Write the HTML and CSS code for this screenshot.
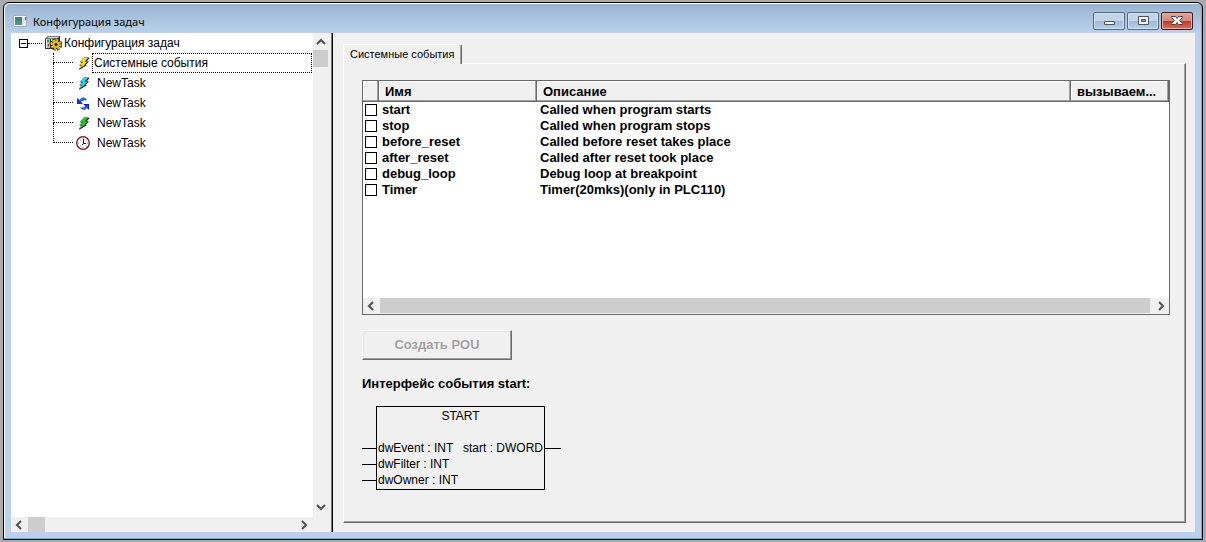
FILE: index.html
```html
<!DOCTYPE html>
<html lang="ru">
<head>
<meta charset="utf-8">
<title>Конфигурация задач</title>
<link rel="stylesheet" href="styles.css">
</head>
<body>
<svg class="defs" width="0" height="0" aria-hidden="true">
  <symbol id="bolt" viewBox="0 0 16 16">
    <path d="M9 3h4.500l-3 3.500h2.500l-3.500 3.500h1.500l-8 5 3-4.500H4l3.500-3H4.500z" fill="#000"/>
    <path d="M8 2.500h4.500L9 6.500h3L8.500 9.500H10L3 14l3-4H3.500L7 7H4z" fill="currentColor" stroke="#555" stroke-width=".5"/>
  </symbol>
  <symbol id="chev-left" viewBox="0 0 16 16"><path d="M10 4L6 8l4 4" fill="none" stroke="#505050" stroke-width="2"/></symbol>
  <symbol id="chev-right" viewBox="0 0 16 16"><path d="M6 4l4 4-4 4" fill="none" stroke="#505050" stroke-width="2"/></symbol>
  <symbol id="chev-up" viewBox="0 0 16 16"><path d="M4 11l4-4 4 4" fill="none" stroke="#505050" stroke-width="2"/></symbol>
  <symbol id="chev-down" viewBox="0 0 16 16"><path d="M4 5l4 4 4-4" fill="none" stroke="#505050" stroke-width="2"/></symbol>
</svg>

<div class="window">
  <header class="titlebar">
    <svg class="app-icon" viewBox="0 0 16 16" aria-hidden="true">
      <defs><linearGradient id="app" x1="0" y1="0" x2="0" y2="1"><stop offset="0" stop-color="#3c74a0"/><stop offset="1" stop-color="#4fa06c"/></linearGradient></defs>
      <path d="M1.500 2.500h13v11h-13z" fill="#fff" stroke="#a3adb7"/>
      <path d="M3 4h7v8H3z" fill="url(#app)"/>
      <path d="M10 4h3v8h-3z" fill="#e2e2e2"/>
      <path d="M13 4h1v3h-1z" fill="#4a6078"/>
    </svg>
    <h1 class="title">Конфигурация задач</h1>
    <div class="controls">
      <button class="control" type="button" aria-label="Свернуть"><svg viewBox="0 0 30 16"><path d="M10.500 8.500h10v3h-10z" fill="#f8f8f8" stroke="#4c5561"/></svg></button>
      <button class="control" type="button" aria-label="Развернуть"><svg viewBox="0 0 30 16"><path d="M10.500 3.500h10v8h-10z" fill="#f8f8f8" stroke="#4c5561"/><path d="M13.500 6.500h4v2h-4z" fill="#8aa9ca" stroke="#4c5561"/></svg></button>
      <button class="control control-close" type="button" aria-label="Закрыть"><svg viewBox="0 0 30 16"><path d="M9.500 3.500h4l1.500 2 1.500-2h4v1L17.500 7.500l3 3v1h-4L15 9.500l-1.500 2h-4v-1l3-3-3-3z" fill="#f8f8f8" stroke="#593b42"/></svg></button>
    </div>
  </header>

  <main class="content">
    <aside class="sidebar">
      <nav class="tree">
        <div class="node">
          <button class="expander" type="button" aria-label="Свернуть узел"></button>
          <span class="dash"></span>
          <svg class="root-icon" viewBox="0 0 17 16" aria-hidden="true">
            <path d="M0 4l3-3h12v10l-2 3H0z" fill="#333"/>
            <path d="M3.500 1.500h11l-2 2h-11z" fill="#d4d4d4"/>
            <path d="M1 4h4v9H1zM6 4h3v9H6zM10 4h3v9h-3z" fill="#b4b4b4"/>
            <path d="M1 4h1v9H1zM6 4h1v9H6zM10 4h1v9h-1z" fill="#eee"/>
            <path d="M2 5h2v2H2z" fill="#0b0"/><path d="M3 9h1v2H3z" fill="#d22"/>
            <circle cx="11" cy="9.500" r="4.500" fill="none" stroke="#222" stroke-width="3.500" stroke-dasharray="2.600 .93"/>
            <circle cx="11" cy="9.500" r="4.300" fill="none" stroke="#f0cc28" stroke-width="2.400" stroke-dasharray="1.680 1.690"/>
            <circle cx="11" cy="9.500" r="2.600" fill="#8a7a40" stroke="#e8c020" stroke-width="1.600"/>
            <circle cx="11" cy="9.500" r="1.200" fill="#222"/>
          </svg>
          <a class="node-label" href="#root">Конфигурация задач</a>
        </div>
        <ul class="children">
          <li class="leaf"><span class="branch"></span><svg class="icon yellow"><use href="#bolt"/></svg><a class="leaf-label selected" href="#events">Системные события</a></li>
          <li class="leaf"><span class="branch"></span><svg class="icon cyan"><use href="#bolt"/></svg><a class="leaf-label" href="#task1">NewTask</a></li>
          <li class="leaf"><span class="branch"></span><svg class="icon" viewBox="0 0 16 16">
            <path d="M1 3v6h6L5 7c0-1 2-2 6-2L9 3C7 2 5 3 3.500 5z" fill="#1030e8"/>
            <path d="M3.500 6C5 4 7 3.500 9 4" fill="none" stroke="#30b0f4"/>
            <path d="M13 15V9H7l2.500 2c0 1-2 2-5.500 1.500L6 14c2 1 3.500 1 5-1z" fill="#0a18d0"/>
            <path d="M11.500 10.500c0 2-2 3-4.500 3" fill="none" stroke="#30b0f4"/>
          </svg><a class="leaf-label" href="#task2">NewTask</a></li>
          <li class="leaf"><span class="branch"></span><svg class="icon green"><use href="#bolt"/></svg><a class="leaf-label" href="#task3">NewTask</a></li>
          <li class="leaf"><span class="branch"></span><svg class="icon" viewBox="0 0 16 16">
            <circle cx="7" cy="8" r="6.300" fill="#fff" stroke="#6b1520" stroke-width="1.300"/>
            <path d="M7 3v1M7 12v1M2 8h1M11 8h1M4 5h1M10 5h1M4 11h1M10 11h1" stroke="#777"/>
            <path d="M7.500 4v4.500H10M7.500 8.500L6 10" fill="none" stroke="#101060"/>
          </svg><a class="leaf-label" href="#task4">NewTask</a></li>
        </ul>
      </nav>
      <div class="vscroll"><svg class="arrow"><use href="#chev-up"/></svg><span class="vthumb"></span><svg class="arrow arrow-end"><use href="#chev-down"/></svg></div>
      <div class="hscroll"><svg class="arrow"><use href="#chev-left"/></svg><span class="hthumb"></span><svg class="arrow arrow-end"><use href="#chev-right"/></svg></div>
    </aside>

    <section class="workspace">
      <div class="tabs" role="tablist"><button class="tab" type="button" role="tab" aria-selected="true">Системные события</button></div>
      <div class="page">
        <div class="list">
          <table class="events">
            <colgroup><col class="col-check"><col class="col-name"><col class="col-text"><col class="col-call"></colgroup>
            <thead><tr><th></th><th>Имя</th><th>Описание</th><th>вызываем...</th></tr></thead>
            <tbody>
              <tr><td><input class="check" type="checkbox" id="e1"></td><td><label for="e1">start</label></td><td>Called when program starts</td><td></td></tr>
              <tr><td><input class="check" type="checkbox" id="e2"></td><td><label for="e2">stop</label></td><td>Called when program stops</td><td></td></tr>
              <tr><td><input class="check" type="checkbox" id="e3"></td><td><label for="e3">before_reset</label></td><td>Called before reset takes place</td><td></td></tr>
              <tr><td><input class="check" type="checkbox" id="e4"></td><td><label for="e4">after_reset</label></td><td>Called after reset took place</td><td></td></tr>
              <tr><td><input class="check" type="checkbox" id="e5"></td><td><label for="e5">debug_loop</label></td><td>Debug loop at breakpoint</td><td></td></tr>
              <tr><td><input class="check" type="checkbox" id="e6"></td><td><label for="e6">Timer</label></td><td>Timer(20mks)(only in PLC110)</td><td></td></tr>
            </tbody>
          </table>
          <div class="list-scroll"><svg class="arrow"><use href="#chev-left"/></svg><span class="list-thumb"></span><svg class="arrow"><use href="#chev-right"/></svg></div>
        </div>
        <button class="create" type="button" disabled>Создать POU</button>
        <h2 class="caption">Интерфейс события start:</h2>
        <div class="diagram">
          <div class="pins"><i class="pin"></i><i class="pin"></i><i class="pin"></i></div>
          <div class="block">
            <div class="block-name">START</div>
            <div class="ports">
              <div class="inputs"><span>dwEvent : INT</span><span>dwFilter : INT</span><span>dwOwner : INT</span></div>
              <div class="outputs">start : DWORD</div>
            </div>
          </div>
          <div class="pins"><i class="pin pin-out"></i></div>
        </div>
      </div>
    </section>
  </main>
</div>
</body>
</html>
```
FILE: styles.css
```css
* { box-sizing: border-box; }
body {
  margin: 0;
  height: 100vh;
  padding: 2px 3px;
  background: #ababab;
  font: 12px/16px "Liberation Sans", Arial, sans-serif;
  color: #000;
}
button, input { font: inherit; color: inherit; margin: 0; padding: 0; }
a { color: inherit; text-decoration: none; }
svg { display: block; flex: none; }
.defs { position: absolute; }

.window {
  height: 100%;
  display: flex;
  flex-direction: column;
  padding: 0 7px 7px;
  border: 1px solid #000;
  border-radius: 6px 6px 0 0;
  background: linear-gradient(#98b3d1, #b9d1ea 30px);
  box-shadow: inset -1px -1px #35c5e4, inset 1px 1px #fff;
  overflow: hidden;
}
.titlebar {
  flex: none;
  display: flex;
  align-items: center;
  height: 30px;
  padding: 5px 2px 0 1px;
}
.app-icon { width: 16px; height: 16px; }
.title { flex: 1; margin: 2px 0 0 5px; font: 11px/16px "Noto Sans", "Open Sans", sans-serif; }
.controls { display: flex; gap: 2px; }
.control {
  width: 32px;
  height: 18px;
  border: 1px solid #586a80;
  border-radius: 2px;
  background: linear-gradient(#c3d4e7 0 50%, #9db8d6 50%, #b9d0e8);
  box-shadow: inset 0 0 0 1px #d0dfef;
}
.control-close {
  border-color: #4a151c;
  background: linear-gradient(#dfa79b, #d2897b 50%, #b83c28 50%, #cf7260);
  box-shadow: inset 0 0 0 1px #e3aca0;
}
.control svg { width: 30px; height: 16px; }

.content { flex: 1; min-height: 0; display: flex; background: #f0f0f0; }
.sidebar {
  flex: none;
  width: 322px;
  display: grid;
  grid-template: minmax(0, 1fr) 15px / minmax(0, 1fr) 19px;
  border-right: 1px solid #000;
  box-shadow: inset -1px 0 #777;
}
.tree { background: #fff; }
.node { display: flex; align-items: center; height: 20px; padding-left: 8px; }
.expander {
  width: 9px;
  height: 9px;
  border: 1px solid #000;
  background: linear-gradient(#000, #000) center / 5px 1px no-repeat #fff;
}
.dash { width: 14px; margin-right: 3px; border-top: 1px dotted #000; }
.root-icon { width: 17px; height: 16px; }
.node-label { padding-left: 2px; }
.children { list-style: none; margin: 0 0 0 42px; padding: 0; }
.leaf { display: flex; height: 20px; }
.branch {
  width: 20px;
  height: 20px;
  margin: -10px 3px 0 0;
  border: dotted #000;
  border-width: 0 0 1px 1px;
}
.leaf:first-child .branch { height: 10px; margin-top: 0; }
.icon { width: 16px; height: 16px; margin-top: 2px; }
.yellow { color: #ffe600; }
.cyan { color: #20d8f0; }
.green { color: #10d020; }
.leaf-label { flex: 1; padding: 2px 0 0 5px; }
.selected { margin-right: 1px; padding: 1px; border: 1px dotted #000; }

.arrow { width: 16px; height: 16px; }
.arrow-end { margin: auto 0 1px; }
.vscroll { display: flex; flex-direction: column; }
.vthumb { width: 15px; height: 17px; margin-top: 1px; background: #cdcdcd; }
.hscroll { display: flex; }
.hthumb { width: 17px; height: 15px; margin-left: 1px; background: #cdcdcd; }
.hscroll .arrow-end { margin: 0 1px 0 auto; }

.workspace {
  flex: 1;
  min-width: 0;
  display: flex;
  flex-direction: column;
  padding: 11px 9px 9px 10px;
}
.tabs { display: flex; }
.tab {
  height: 20px;
  margin-bottom: -1px;
  padding: 0 7px 2px 6px;
  border: solid;
  border-width: 1px 1px 0;
  border-color: #fff #696969 #fff #fff;
  border-radius: 2px 2px 0 0;
  background: #f0f0f0;
  box-shadow: inset -1px 0 #a0a0a0;
  font-size: 11px;
  z-index: 1;
}
.page {
  flex: 1;
  padding: 16px 15px 0 18px;
  border: 1px solid;
  border-color: #fff #696969 #696969 #fff;
  box-shadow: inset -1px -1px #a0a0a0;
}
.list {
  display: flex;
  flex-direction: column;
  justify-content: space-between;
  height: 235px;
  border: 1px solid #696969;
  background: #fff;
}
.events {
  width: 100%;
  table-layout: fixed;
  border-collapse: collapse;
  font-size: 13px;
  font-weight: bold;
  text-align: left;
}
.col-check { width: 16px; }
.col-name { width: 158px; }
.col-call { width: 98px; }
.events th {
  height: 21px;
  padding: 1px 0 0 6px;
  background: #f0f0f0;
  box-shadow: inset -1px -1px #696969, inset -2px -2px #a0a0a0, inset 1px 1px #fff;
}
.events td { height: 16px; padding: 0 0 0 3px; line-height: 16px; white-space: nowrap; }
.events td:first-child { padding-left: 2px; }
.check {
  display: block;
  width: 12px;
  height: 12px;
  appearance: none;
  border: 1px solid #000;
  background: #fff;
}
.list-scroll { display: flex; height: 16px; background: #f0f0f0; }
.list-thumb { flex: 1; height: 15px; margin: 0 3px 0 1px; background: #cdcdcd; }
.create {
  display: block;
  width: 150px;
  height: 30px;
  margin-top: 15px;
  border: 1px solid;
  border-color: #fff #696969 #696969 #fff;
  background: #f0f0f0;
  box-shadow: inset -1px -1px #a0a0a0, inset 1px 1px #e3e3e3;
  color: #a0a0a0;
  font-size: 13px;
  font-weight: bold;
  text-shadow: 1px 1px #fff;
}
.caption { margin: 16px 0 14px; font-size: 13px; line-height: 16px; }
.diagram { display: flex; }
.block { width: 169px; height: 84px; padding: 1px; border: 1px solid #000; }
.block-name { padding-bottom: 16px; text-align: center; }
.ports { display: flex; justify-content: space-between; }
.inputs { display: flex; flex-direction: column; }
.pins { display: flex; flex-direction: column; gap: 15px; padding-top: 42px; }
.pin { width: 14px; height: 1px; background: #000; }
.pin-out { width: 16px; }
```
